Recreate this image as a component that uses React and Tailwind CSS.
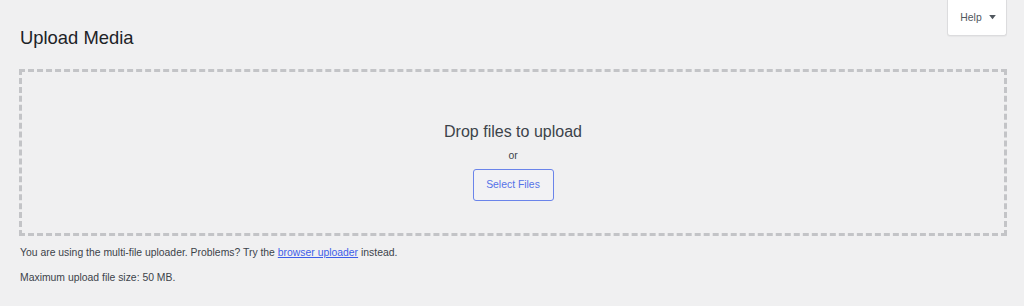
export default function App() {
  return (
    <div
      className="min-h-[306px] w-full bg-[#f0f0f1] text-[#3c434a]"
      style={{ fontFamily: '"Liberation Sans", Arial, sans-serif' }}
    >
      {/* Header */}
      <div className="flex h-[50px] items-start justify-between pl-5 pr-[17px]">
        <h1 className="pt-[26px] text-[18.4px] leading-[24px] text-[#1d2327]">Upload Media</h1>
        <button className="flex h-[36px] w-[60px] items-center justify-center gap-[7px] rounded-b-[3px] border border-t-0 border-[#dcdcde] bg-white pl-[2px] text-[10.4px] text-[#50575e] shadow-[0_1px_1px_rgba(0,0,0,0.04)]">
          Help
          <svg width="7" height="5" viewBox="0 0 8 6">
            <path d="M0 0h8L4 5z" fill="#50575e" />
          </svg>
        </button>
      </div>

      {/* Drop area */}
      <div className="pl-[19px] pr-[17px] pt-[19px]">
        <div className="flex h-[167px] flex-col items-center border-[3px] border-dashed border-[#c3c4c7] pt-[50px]">
          <p className="text-[16px] leading-[20px] text-[#3c434a]">Drop files to upload</p>
          <p className="mt-[7px] text-[10.4px] leading-[14px] text-[#3c434a]">or</p>
          <button className="mt-[6px] h-[32px] w-[81px] rounded-[3px] border border-[#6a84ea] bg-[#f2f2f4] text-[10.4px] text-[#5572e8]">
            Select Files
          </button>
        </div>
      </div>

      {/* Info */}
      <div className="pl-5 pt-[10px] text-[10.4px] leading-[14px]">
        <p>
          You are using the multi-file uploader. Problems? Try the{' '}
          <a href="#" className="text-[#3d5ee9] underline">browser uploader</a> instead.
        </p>
        <p className="mt-[11px]">Maximum upload file size: 50 MB.</p>
      </div>
    </div>
  )
}
